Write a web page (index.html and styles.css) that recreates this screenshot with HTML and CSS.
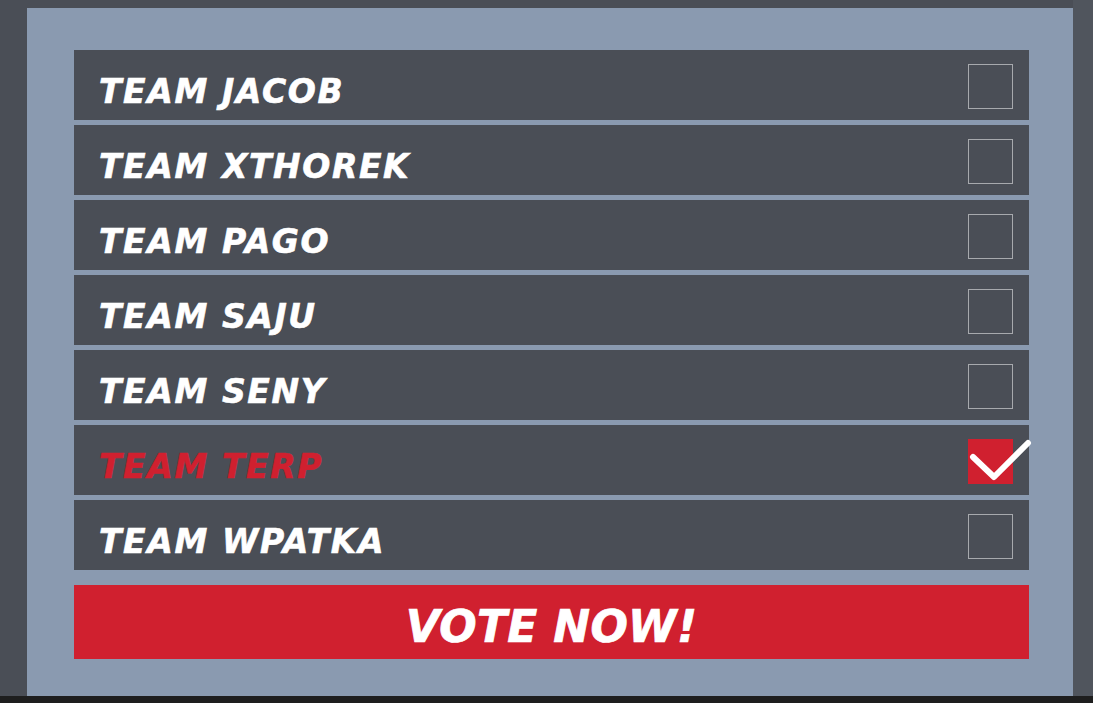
FILE: index.html
```html
<!DOCTYPE html>
<html>
<head>
<meta charset="utf-8">
<link rel="stylesheet" href="styles.css">
</head>
<body>
<div class="page">
  <div class="panel">
    <div class="list">
      <div class="row"><span class="name">TEAM JACOB</span><span class="box"></span></div>
      <div class="row"><span class="name">TEAM XTHOREK</span><span class="box"></span></div>
      <div class="row"><span class="name">TEAM PAGO</span><span class="box"></span></div>
      <div class="row"><span class="name">TEAM SAJU</span><span class="box"></span></div>
      <div class="row"><span class="name">TEAM SENY</span><span class="box"></span></div>
      <div class="row selected"><span class="name">TEAM TERP</span><span class="box checked"><svg class="check" width="70" height="50" viewBox="0 0 70 50"><path d="M8 22 L29 42 L63 8" fill="none" stroke="#fff" stroke-width="6" stroke-linecap="round" stroke-linejoin="round"/></svg></span></div>
      <div class="row"><span class="name">TEAM WPATKA</span><span class="box"></span></div>
    </div>
    <div class="vote">VOTE NOW!</div>
  </div>
</div>
<div class="footer"></div>
</body>
</html>
```
FILE: styles.css
```css
html, body {
  margin: 0;
  padding: 0;
}
body {
  background: #4a4e56;
  width: 1093px;
  height: 703px;
  overflow: hidden;
  font-family: "DejaVu Sans", "Liberation Sans", sans-serif;
}
.page {
  height: 696px;
  padding-top: 8px;
  box-sizing: border-box;
  background: linear-gradient(90deg, #4a4e56 0, #4a4e56 1073px, #50555d 1073px);
}
.panel {
  margin-left: 27px;
  width: 1046px;
  height: 688px;
  box-sizing: border-box;
  padding: 42px 44px 37px 47px;
  background: #8a9ab0;
  display: flex;
  flex-direction: column;
}
.list {
  display: flex;
  flex-direction: column;
  gap: 5px;
}
.row {
  height: 70px;
  background: #4a4e56;
  display: flex;
  align-items: center;
  justify-content: space-between;
  padding: 0 16px 0 25px;
}
.name {
  color: #ffffff;
  font-weight: bold;
  font-style: oblique;
  font-size: 33px;
  letter-spacing: 1.6px;
  -webkit-text-stroke: 0.6px currentColor;
  padding-top: 12px;
}
.selected .name {
  color: #d0202f;
}
.box {
  align-self: flex-start;
  margin-top: 14px;
  width: 45px;
  height: 45px;
  box-sizing: border-box;
  border: 1px solid #a7a9ad;
  position: relative;
}
.box.checked {
  background: #d0202f;
  border: none;
}
.check {
  position: absolute;
  left: -3px;
  top: -4px;
}
.vote {
  margin-top: 15px;
  height: 74px;
  background: #d0202f;
  color: #ffffff;
  font-weight: bold;
  font-style: oblique;
  font-size: 44px;
  letter-spacing: 0.3px;
  -webkit-text-stroke: 0.7px currentColor;
  display: flex;
  align-items: center;
  justify-content: center;
  padding-top: 8px;
  box-sizing: border-box;
}
.footer {
  height: 7px;
  background: #1e1e1e;
}
```
